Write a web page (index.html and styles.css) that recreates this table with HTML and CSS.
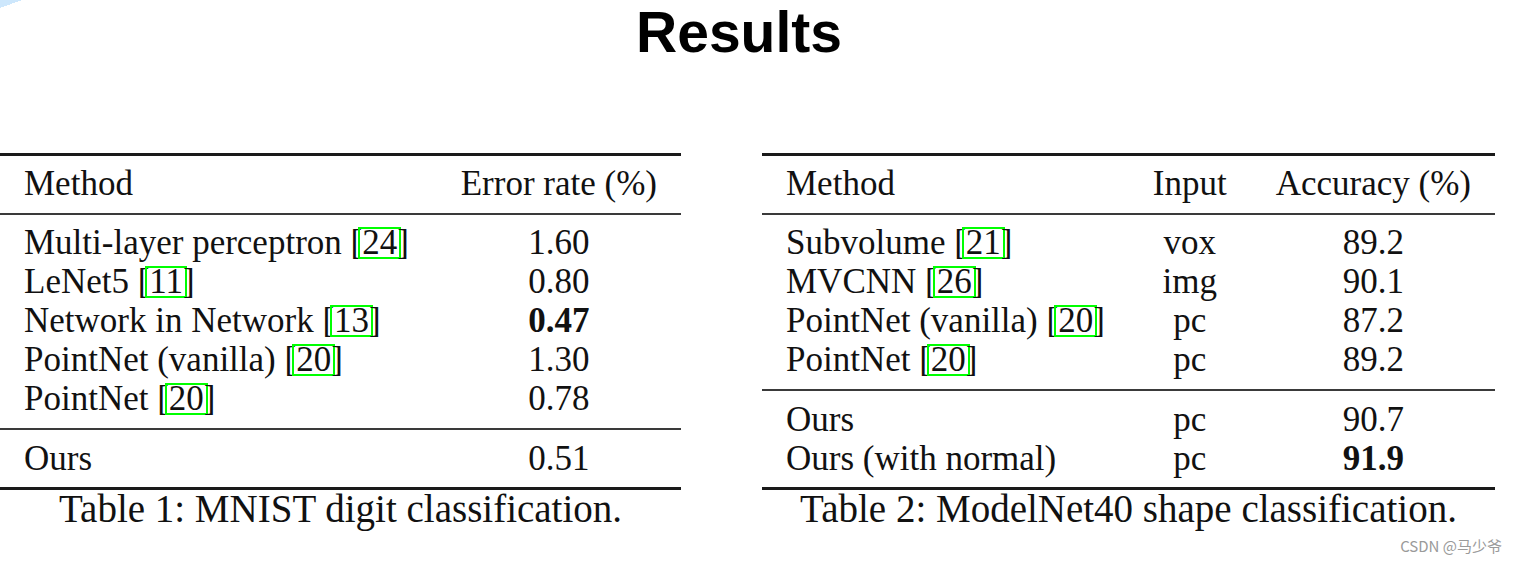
FILE: index.html
```html
<!DOCTYPE html>
<html>
<head>
  <title>Results</title>
  <link rel="stylesheet" href="styles.css">
</head>
<body>
<h1 class="title">Results</h1>

<div class="tables">
  <table class="results mnist">
    <caption>Table 1: MNIST digit classification.</caption>
    <thead>
      <tr><th class="method">Method</th><th class="num">Error rate (%)</th></tr>
    </thead>
    <tbody>
      <tr><td class="method">Multi-layer perceptron [<span class="ref">24</span>]</td><td class="num">1.60</td></tr>
      <tr><td class="method">LeNet5 [<span class="ref">11</span>]</td><td class="num">0.80</td></tr>
      <tr><td class="method">Network in Network [<span class="ref">13</span>]</td><td class="num"><b>0.47</b></td></tr>
      <tr><td class="method">PointNet (vanilla) [<span class="ref">20</span>]</td><td class="num">1.30</td></tr>
      <tr><td class="method">PointNet [<span class="ref">20</span>]</td><td class="num">0.78</td></tr>
    </tbody>
    <tbody>
      <tr><td class="method">Ours</td><td class="num">0.51</td></tr>
    </tbody>
  </table>

  <table class="results modelnet">
    <caption>Table 2: ModelNet40 shape classification.</caption>
    <thead>
      <tr><th class="method">Method</th><th class="input">Input</th><th class="num">Accuracy (%)</th></tr>
    </thead>
    <tbody>
      <tr><td class="method">Subvolume [<span class="ref">21</span>]</td><td class="input">vox</td><td class="num">89.2</td></tr>
      <tr><td class="method">MVCNN [<span class="ref">26</span>]</td><td class="input">img</td><td class="num">90.1</td></tr>
      <tr><td class="method">PointNet (vanilla) [<span class="ref">20</span>]</td><td class="input">pc</td><td class="num">87.2</td></tr>
      <tr><td class="method">PointNet [<span class="ref">20</span>]</td><td class="input">pc</td><td class="num">89.2</td></tr>
    </tbody>
    <tbody>
      <tr><td class="method">Ours</td><td class="input">pc</td><td class="num">90.7</td></tr>
      <tr><td class="method">Ours (with normal)</td><td class="input">pc</td><td class="num"><b>91.9</b></td></tr>
    </tbody>
  </table>
</div>

<div class="watermark">CSDN @马少爷</div>
</body>
</html>
```

FILE: styles.css
```css
body {
  margin: 0;
  background: #fff linear-gradient(to bottom right, #cde7fc 50%, transparent 50%) no-repeat 0 0 / 22px 8px;
  color: #111;
  font-family: "Liberation Serif", "Times New Roman", serif;
  position: relative;
  height: 564px;
  overflow: hidden;
}
.title {
  margin: 0;
  padding-right: 39px;
  font-family: "Liberation Sans", Arial, sans-serif;
  font-size: 57px;
  font-weight: bold;
  line-height: 64px;
  text-align: center;
  color: #000;
}
.tables { display: flex; gap: 81px; margin-top: 89px; }
.results { border-collapse: collapse; font-size: 35px; line-height: 39px; }
.mnist { width: 681px; }
.modelnet { width: 732px; }
.results caption {
  caption-side: bottom;
  font-size: 39px;
  line-height: 37px;
  text-align: center;
  white-space: nowrap;
}
.results th, .results td { padding: 0 24px; font-weight: normal; white-space: nowrap; }
.results .method { width: 100%; text-align: left; }
.results .num, .results .input { text-align: center; }
.results .input { padding-right: 25px; }
.results b { font-weight: bold; }
.results thead { border-top: 3px solid #1a1a1a; border-bottom: 2px solid #3a3a3a; }
.results thead th { padding-top: 8px; padding-bottom: 10px; }
.results tbody tr:first-child td { padding-top: 8px; }
.results tbody tr:last-child td { padding-bottom: 10px; }
.results tbody + tbody { border-top: 2px solid #3a3a3a; border-bottom: 3px solid #1a1a1a; }
.results tbody + tbody tr:first-child td { padding-top: 9px; }
.results tbody + tbody tr:last-child td { padding-bottom: 9px; }
.ref {
  display: inline-block;
  line-height: 28px;
  padding: 0 2px;
  margin: 0 -4px;
  border: 2px solid #0f0;
}
.watermark {
  position: absolute;
  right: 15px;
  bottom: 9px;
  font-family: "Noto Sans CJK SC", "Noto Sans", sans-serif;
  font-size: 15px;
  line-height: 18px;
  color: #9a9a9a;
}
```
